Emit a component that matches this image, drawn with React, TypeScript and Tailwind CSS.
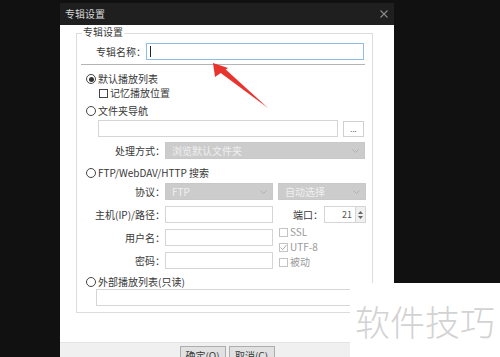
import React from "react";

const font = "font-['Noto_Sans_CJK_SC','Microsoft_YaHei',sans-serif]";

function Radio({ checked, label }: { checked?: boolean; label: string }) {
  return (
    <div className="flex h-[14px] items-center pl-[9px]">
      <span className="flex h-[10px] w-[10px] items-center justify-center rounded-full border border-[#444]">
        {checked && <span className="h-[5px] w-[5px] rounded-full bg-[#333]" />}
      </span>
      <span className="ml-[2px] text-[10px] leading-none text-[#383838]">{label}</span>
    </div>
  );
}

function Check({ label, checked }: { label: string; checked?: boolean }) {
  return (
    <div className="flex h-[10px] items-center">
      <span className="flex h-[9px] w-[9px] items-center justify-center border border-[#c4c4c4] bg-white">
        {checked && (
          <svg width="7" height="7" viewBox="0 0 7 7">
            <path d="M0.5 3.5 L2.7 5.7 L6.5 1" fill="none" stroke="#a0a0a0" strokeWidth="0.9" />
          </svg>
        )}
      </span>
      <span className="ml-[2px] text-[10px] leading-none text-[#9a9a9a]">{label}</span>
    </div>
  );
}

function Select({ value, width }: { value: string; width: string }) {
  return (
    <div className={`flex h-[17px] items-center justify-between border border-[#c8c8c8] bg-[#cccccc] pl-[6px] pr-[5px] ${width}`}>
      <span className="text-[10px] leading-none text-[#efefef]">{value}</span>
      <svg width="7" height="4" viewBox="0 0 7 4">
        <path d="M0.5 0.5 L3.5 3.5 L6.5 0.5" fill="none" stroke="#a8a8a8" strokeWidth="0.8" />
      </svg>
    </div>
  );
}

function Field({ label, children }: { label: string; children: React.ReactNode }) {
  return (
    <div className="flex h-[17px] items-center">
      <span className="w-[88px] text-right text-[10px] leading-none text-[#383838]">{label}</span>
      {children}
    </div>
  );
}

export default function App() {
  return (
    <div className={`relative h-[357px] w-[500px] overflow-hidden bg-[#111111] ${font}`}>
      <div className="ml-[60px] mt-[3px] flex w-[334px] flex-col bg-white">
        {/* title bar */}
        <div className="flex h-[22px] items-center justify-between bg-[#1f1f1f] pl-[5px] pr-[5px]">
          <span className="text-[10px] leading-none text-[#d8d8d8]">专辑设置</span>
          <svg width="8" height="8" viewBox="0 0 8 8" className="mr-[1px]">
            <path d="M0.5 0.5 L7.5 7.5 M7.5 0.5 L0.5 7.5" stroke="#8a8a8a" strokeWidth="1.1" />
          </svg>
        </div>

        <div className="px-[16px] pt-[8px]">
          <div className="relative w-[297px] border border-[#dcdcdc] pb-[6px] pr-[6px]">
            <span className="absolute -top-[7px] left-[5px] bg-white px-[1px] text-[10px] leading-none text-[#383838]">
              专辑设置
            </span>

            <div className="mt-[9px] flex h-[17px] items-center">
              <span className="w-[69px] text-right text-[10px] leading-none text-[#383838]">专辑名称：</span>
              <div className="flex h-[17px] w-[218px] items-center border border-[#8fbde6] pl-[3px]">
                <span className="h-[11px] w-px bg-[#222]" />
              </div>
            </div>
            <div className="ml-[4px] mt-[4px] h-px w-[284px] bg-[#b4b4b4]" />

            <div className="mt-[7px]">
              <Radio checked label="默认播放列表" />
            </div>
            <div className="flex h-[14px] items-center pl-[22px]">
              <span className="h-[9px] w-[9px] border border-[#444]" />
              <span className="ml-[2px] text-[10px] leading-none text-[#383838]">记忆播放位置</span>
            </div>
            <div className="mt-[4px]">
              <Radio label="文件夹导航" />
            </div>
            <div className="mt-[2px] flex items-center pl-[21px]">
              <div className="h-[17px] w-[240px] border border-[#d5d5d5]" />
              <div className="ml-[5px] flex h-[16px] w-[21px] items-center justify-center border border-[#d0d0d0] text-[8px] leading-none text-[#555]">
                ...
              </div>
            </div>
            <div className="mt-[5px]">
              <Field label="处理方式：">
                <Select value="浏览默认文件夹" width="w-[200px]" />
              </Field>
            </div>

            <div className="mt-[7px]">
              <Radio label="FTP/WebDAV/HTTP 搜索" />
            </div>
            <div className="mt-[3px]">
              <Field label="协议：">
                <Select value="FTP" width="w-[108px]" />
                <div className="ml-[5px]">
                  <Select value="自动选择" width="w-[88px]" />
                </div>
              </Field>
            </div>
            <div className="mt-[6px]">
              <Field label="主机(IP)/路径：">
                <div className="h-[17px] w-[108px] border border-[#d5d5d5]" />
                <span className="ml-[20px] w-[31px] text-[10px] leading-none text-[#383838]">端口：</span>
                <div className="flex h-[17px] w-[42px] items-center justify-end border border-[#d5d5d5]">
                  <span className="mr-[3px] text-[9px] leading-none text-[#555]">21</span>
                  <div className="flex h-full w-[10px] flex-col items-center justify-center gap-[2px] border-l border-[#d5d5d5] bg-[#f0f0f0]">
                    <svg width="5" height="3" viewBox="0 0 5 3">
                      <path d="M0 3 L2.5 0 L5 3 Z" fill="#666" />
                    </svg>
                    <svg width="5" height="3" viewBox="0 0 5 3">
                      <path d="M0 0 L2.5 3 L5 0 Z" fill="#666" />
                    </svg>
                  </div>
                </div>
              </Field>
            </div>
            <div className="flex items-start">
              <div className="flex flex-col gap-[6px] pt-[6px]">
                <Field label="用户名：">
                  <div className="h-[17px] w-[108px] border border-[#d5d5d5]" />
                </Field>
                <Field label="密码：">
                  <div className="h-[17px] w-[108px] border border-[#d5d5d5]" />
                </Field>
              </div>
              <div className="ml-[6px] flex flex-col gap-[5px] pt-[4px]">
                <Check label="SSL" />
                <Check label="UTF-8" checked />
                <Check label="被动" />
              </div>
            </div>

            <div className="mt-[6px]">
              <Radio label="外部播放列表(只读)" />
            </div>
            <div className="ml-[19px] h-[17px] w-[270px] border border-[#d5d5d5]" />
          </div>
        </div>

        <div className="h-[29px]" />
        <div className="flex h-[40px] justify-center gap-[3px] border-t border-[#e3e3e3] bg-[#f0f0f0] pt-[3px]">
          <div className="flex h-[20px] w-[46px] items-center justify-center border border-[#adadad] bg-[#e1e1e1] text-[10px] leading-none text-[#383838]">
            确定(O)
          </div>
          <div className="flex h-[20px] w-[46px] items-center justify-center border border-[#adadad] bg-[#e1e1e1] text-[10px] leading-none text-[#383838]">
            取消(C)
          </div>
        </div>
      </div>

      {/* red arrow */}
      <svg className="pointer-events-none absolute left-0 top-0" width="500" height="357" viewBox="0 0 500 357">
        <polygon points="213,63 215,77 228,68" fill="#e8342f" />
        <polygon points="218,71 223,67 268,108" fill="#e8342f" />
      </svg>

      {/* watermark */}
      <div className="absolute bottom-0 right-0 flex h-[74px] w-[150px] items-center justify-center bg-white">
        <span className="text-[35px] font-light leading-none text-[#d2d2d2]">软件技巧</span>
      </div>
    </div>
  );
}
